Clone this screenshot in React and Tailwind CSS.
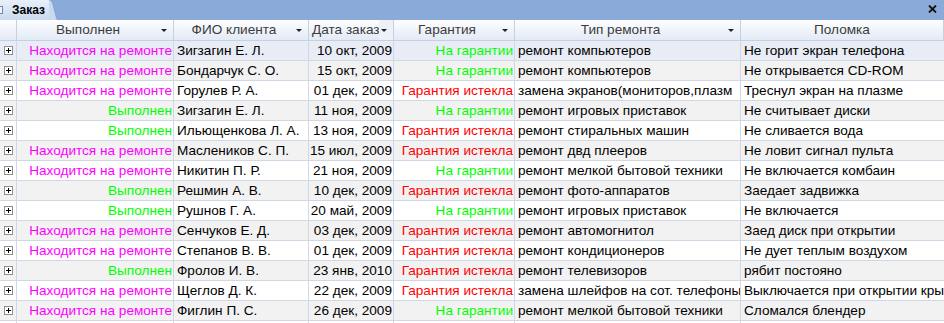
const rows = [
  ['Находится на ремонте', 'Зигзагин Е. Л.', '10 окт, 2009', 'На гарантии', 'ремонт компьютеров', 'Не горит экран телефона'],
  ['Находится на ремонте', 'Бондарчук С. О.', '15 окт, 2009', 'На гарантии', 'ремонт компьютеров', 'Не открывается CD-ROM'],
  ['Находится на ремонте', 'Горулев Р. А.', '01 дек, 2009', 'Гарантия истекла', 'замена экранов(мониторов,плазм', 'Треснул экран на плазме'],
  ['Выполнен', 'Зигзагин Е. Л.', '11 ноя, 2009', 'На гарантии', 'ремонт игровых приставок', 'Не считывает диски'],
  ['Выполнен', 'Ильющенкова Л. А.', '13 ноя, 2009', 'Гарантия истекла', 'ремонт стиральных машин', 'Не сливается вода'],
  ['Находится на ремонте', 'Маслеников С. П.', '15 июл, 2009', 'Гарантия истекла', 'ремонт двд плееров', 'Не ловит сигнал пульта'],
  ['Находится на ремонте', 'Никитин П. Р.', '21 ноя, 2009', 'На гарантии', 'ремонт мелкой бытовой техники', 'Не включается комбаин'],
  ['Выполнен', 'Решмин А. В.', '10 дек, 2009', 'Гарантия истекла', 'ремонт фото-аппаратов', 'Заедает задвижка'],
  ['Выполнен', 'Рушнов Г. А.', '20 май, 2009', 'На гарантии', 'ремонт игровых приставок', 'Не включается'],
  ['Находится на ремонте', 'Сенчуков Е. Д.', '03 дек, 2009', 'Гарантия истекла', 'ремонт автомогнитол', 'Заед диск при открытии'],
  ['Находится на ремонте', 'Степанов В. В.', '01 дек, 2009', 'Гарантия истекла', 'ремонт кондиционеров', 'Не дует теплым воздухом'],
  ['Выполнен', 'Фролов И. В.', '23 янв, 2010', 'Гарантия истекла', 'ремонт телевизоров', 'рябит постояно'],
  ['Находится на ремонте', 'Щеглов Д. К.', '22 дек, 2009', 'Гарантия истекла', 'замена шлейфов на сот. телефоны', 'Выключается при открытии крышки'],
  ['Находится на ремонте', 'Фиглин П. С.', '26 дек, 2009', 'На гарантии', 'ремонт мелкой бытовой техники', 'Сломался блендер'],
]

function Arrow() {
  return <span className="absolute right-[6px] top-[9px] w-0 h-0 border-l-[3px] border-r-[3px] border-t-[3px] border-l-transparent border-r-transparent border-t-[#222]" />
}

function Head({ w, children, arrow = true }) {
  return (
    <div className={`relative shrink-0 ${w} h-full border-r border-[#c5d1e3] flex items-center justify-center ${arrow ? 'pr-[14px]' : ''} text-[#3b3b3b]`}>
      {children}
      {arrow && <Arrow />}
    </div>
  )
}

function PlusBox() {
  return (
    <span className="relative block w-[9px] h-[9px] border border-[#8f8f8f] bg-white">
      <span className="absolute left-[1px] top-[3px] w-[5px] h-[1px] bg-black" />
      <span className="absolute left-[3px] top-[1px] w-[1px] h-[5px] bg-black" />
    </span>
  )
}

export default function App() {
  return (
    <div className="w-[944px] h-[323px] overflow-hidden bg-white text-[13.6px] leading-none" style={{ fontFamily: '"Liberation Sans", Arial, sans-serif' }}>
      {/* tab bar */}
      <div className="h-[20px] bg-[#8aaad9] flex items-end relative">
        <div className="relative h-[20px] w-[50px] bg-gradient-to-b from-[#e8f0fa] to-[#c9daf0] flex items-center pl-[12px] font-bold text-[12px] text-black">
          <span className="absolute left-[-3px] top-[6px] w-[6px] h-[8px] border border-[#6f87a8] bg-[#eef3fa]" />
          Заказ
          <svg className="absolute right-[-8px] top-0" width="9" height="20" viewBox="0 0 9 20">
            <path d="M0 0 C4 0 4 6 6 12 C7 17 8 20 9 20 L0 20 Z" fill="#c9daf0" />
            <path d="M0 0 C4 0 4 6 6 12 C7 17 8 20 9 20" fill="none" stroke="#7f9cc8" strokeWidth="0.8" />
          </svg>
        </div>
        <svg className="absolute right-[7px] top-[5px]" width="9" height="8" viewBox="0 0 9 8">
          <path d="M1 0.5 L8 7.5 M8 0.5 L1 7.5" stroke="#111" strokeWidth="1.8" />
        </svg>
      </div>
      {/* header */}
      <div className="h-[21px] flex border-b border-[#c5d1e3] bg-gradient-to-b from-[#fdfeff] to-[#e2eaf5]">
        <div className="shrink-0 w-[17px] h-full border-r border-[#c5d1e3]" />
        <Head w="w-[157px]">Выполнен</Head>
        <Head w="w-[135px]">ФИО клиента</Head>
        <div className="relative shrink-0 w-[85px] h-full border-r border-[#c5d1e3] flex items-center pl-[3px] text-[#3b3b3b] overflow-hidden">
          <span className="whitespace-nowrap">Дата заказ</span>
          <span className="absolute right-0 top-0 h-full w-[14px] bg-[#edf2f9]" />
          <Arrow />
        </div>
        <Head w="w-[121px]">Гарантия</Head>
        <Head w="w-[226px]">Тип ремонта</Head>
        <Head w="flex-1" arrow={false}>Поломка</Head>
      </div>
      {rows.map((r, i) => {
        const bg = i === 0 ? 'bg-[#e8ecf4]' : i % 2 === 1 ? 'bg-[#f2f2f2]' : 'bg-white'
        return (
          <div key={i} className={`h-[20px] flex border-b border-[#d0d7e5] ${bg} text-black`}>
            <div className="shrink-0 w-[17px] h-full border-r border-[#d0d7e5] flex items-center justify-center">
              <PlusBox />
            </div>
            <div className={`shrink-0 w-[157px] h-full border-r border-[#d0d7e5] flex items-center justify-end pr-[1px] whitespace-nowrap ${r[0] === 'Выполнен' ? 'text-[#00ff00]' : 'text-[#ff00ff]'}`}>{r[0]}</div>
            <div className="shrink-0 w-[135px] h-full border-r border-[#d0d7e5] flex items-center pl-[3px] whitespace-nowrap overflow-hidden">{r[1]}</div>
            <div className="shrink-0 w-[85px] h-full border-r border-[#d0d7e5] flex items-center justify-end pr-[1px] whitespace-nowrap">{r[2]}</div>
            <div className={`shrink-0 w-[121px] h-full border-r border-[#d0d7e5] flex items-center justify-end pr-[1px] whitespace-nowrap ${r[3] === 'На гарантии' ? 'text-[#00ff00]' : 'text-[#ff0000]'}`}>{r[3]}</div>
            <div className="shrink-0 w-[226px] h-full border-r border-[#d0d7e5] flex items-center pl-[3px] whitespace-nowrap overflow-hidden">{r[4]}</div>
            <div className="flex-1 min-w-0 h-full flex items-center pl-[3px] whitespace-nowrap overflow-hidden">{r[5]}</div>
          </div>
        )
      })}
      <div className="h-[20px] flex bg-white">
        <div className="shrink-0 w-[17px] h-full border-r border-[#d0d7e5]" />
        <div className="shrink-0 w-[157px] h-full border-r border-[#d0d7e5]" />
        <div className="shrink-0 w-[135px] h-full border-r border-[#d0d7e5]" />
        <div className="shrink-0 w-[85px] h-full border-r border-[#d0d7e5]" />
        <div className="shrink-0 w-[121px] h-full border-r border-[#d0d7e5]" />
        <div className="shrink-0 w-[226px] h-full border-r border-[#d0d7e5]" />
      </div>
    </div>
  )
}
